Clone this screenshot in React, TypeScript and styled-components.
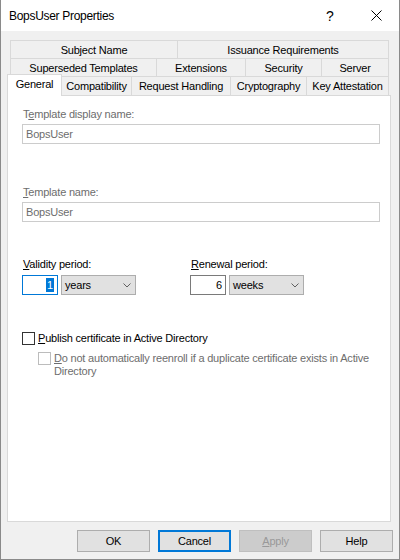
import React from 'react';
import styled, { createGlobalStyle, css } from 'styled-components';

const Global = createGlobalStyle`
  html, body {
    margin: 0;
    padding: 0;
    background: #f0f0f0;
  }
  body {
    font-family: "Liberation Sans", Arial, sans-serif;
    font-size: 11px;
    letter-spacing: -0.2px;
    color: #000;
  }
  * { box-sizing: border-box; }
`;

const Window = styled.div`
  width: 400px;
  height: 560px;
  background: #f0f0f0;
  border-left: 1px solid #8a8a8a;
  border-right: 1px solid #8a8a8a;
  border-bottom: 1px solid #8a8a8a;
  display: flex;
  flex-direction: column;
`;

const TitleBar = styled.div`
  flex: none;
  height: 31px;
  background: #fff;
  display: flex;
  align-items: center;
`;

const Title = styled.div`
  flex: 1;
  padding-left: 8px;
  font-size: 12px;
  letter-spacing: -0.3px;
`;

const CaptionButton = styled.div`
  width: 46px;
  height: 31px;
  display: flex;
  align-items: center;
  justify-content: center;
  font-size: 14px;
  letter-spacing: 0;
`;

const Body = styled.div`
  flex: 1;
  display: flex;
  flex-direction: column;
  padding: 9px 0 0 6px;
`;

const TabStrip = styled.div`
  display: flex;
  flex-direction: column;
  width: 384px;
`;

const TabRow = styled.div<{ $front?: boolean }>`
  display: flex;
  align-items: flex-end;
  padding: ${p => (p.$front ? '0' : '0 2px 0 3px')};
  height: ${p => (p.$front ? '19px' : '18px')};
`;

const Tab = styled.div<{ $w: number; $last?: boolean; $selected?: boolean; $noLeft?: boolean }>`
  flex: none;
  width: ${p => p.$w}px;
  height: 100%;
  display: flex;
  align-items: center;
  justify-content: center;
  white-space: nowrap;
  background: #f0f0f0;
  border-top: 1px solid #d9d9d9;
  border-left: ${p => (p.$noLeft ? 'none' : '1px solid #d9d9d9')};
  border-right: ${p => (p.$last ? '1px solid #d9d9d9' : 'none')};
  ${p =>
    p.$selected &&
    css`
      position: relative;
      z-index: 1;
      height: 22px;
      margin-bottom: -1px;
      padding-bottom: 3px;
      background: #fff;
      border-right: 1px solid #d9d9d9;
    `}
`;

const Panel = styled.div`
  width: 384px;
  height: 427px;
  background: #fff;
  border: 1px solid #d9d9d9;
  display: flex;
  flex-direction: column;
  padding: 12px 0 0 14px;
`;

const FieldLabel = styled.div<{ $disabled?: boolean; $gap?: number }>`
  height: 13px;
  line-height: 13px;
  margin-left: 1px;
  margin-top: ${p => p.$gap ?? 0}px;
  color: ${p => (p.$disabled ? '#6d6d6d' : '#000')};
  white-space: nowrap;
`;

const TextBox = styled.div`
  margin-top: 3px;
  width: 358px;
  height: 20px;
  border: 1px solid #cccccc;
  background: #fff;
  color: #6d6d6d;
  display: flex;
  align-items: center;
  padding-left: 3px;
`;

const PeriodRow = styled.div`
  margin-top: 36px;
  display: grid;
  grid-template-columns: 168px 120px;
`;

const PeriodGroup = styled.div`
  display: flex;
  flex-direction: column;
`;

const PeriodControls = styled.div`
  margin-top: 4px;
  display: flex;
  gap: 3px;
`;

const NumberBox = styled.div<{ $focused?: boolean }>`
  width: 36px;
  height: 20px;
  background: #fff;
  border: 1px solid ${p => (p.$focused ? '#0078d7' : '#7a7a7a')};
  display: flex;
  align-items: center;
  justify-content: flex-end;
  padding-right: 3px;
`;

const Selection = styled.span`
  background: #0078d7;
  color: #fff;
  height: 14px;
  line-height: 14px;
  padding: 0 1px;
`;

const Combo = styled.div`
  width: 75px;
  height: 20px;
  background: #e1e1e1;
  border: 1px solid #adadad;
  display: flex;
  align-items: center;
  justify-content: space-between;
  padding: 0 4px 0 3px;
`;

const CheckRow = styled.div<{ $indent?: number; $gap: number }>`
  display: flex;
  align-items: flex-start;
  margin-left: ${p => p.$indent ?? 0}px;
  margin-top: ${p => p.$gap}px;
`;

const Box = styled.span<{ $disabled?: boolean }>`
  flex: none;
  width: 13px;
  height: 13px;
  background: #fff;
  border: 1px solid ${p => (p.$disabled ? '#bcbcbc' : '#333333')};
`;

/* The first letter carries the keyboard-accelerator underline. */
const CheckText = styled.div<{ $disabled?: boolean }>`
  margin-left: 3px;
  line-height: 13px;
  width: ${p => (p.$disabled ? '330px' : 'auto')};
  color: ${p => (p.$disabled ? '#6d6d6d' : '#000')};
  &::first-letter {
    text-decoration: underline;
  }
`;

const ButtonBar = styled.div`
  margin-top: 8px;
  width: 386px;
  display: flex;
  justify-content: flex-end;
  gap: 8px;
`;

const Button = styled.div<{ $default?: boolean; $disabled?: boolean }>`
  width: 73px;
  height: 22px;
  display: flex;
  align-items: center;
  justify-content: center;
  background: ${p => (p.$disabled ? '#cccccc' : '#e1e1e1')};
  border: ${p =>
    p.$default ? '2px solid #0078d7' : p.$disabled ? '1px solid #bfbfbf' : '1px solid #adadad'};
  color: ${p => (p.$disabled ? '#999999' : '#000')};
`;

const U = styled.span`
  text-decoration: underline;
  text-underline-offset: 1px;
`;

const Chevron = () => (
  <svg width="8" height="5" viewBox="0 0 8 5">
    <path d="M0.5 0.5 L4 4 L7.5 0.5" fill="none" stroke="#606060" strokeWidth="1" />
  </svg>
);

const CloseGlyph = () => (
  <svg width="11" height="11" viewBox="0 0 11 11">
    <path d="M0.5 0.5 L10.5 10.5 M10.5 0.5 L0.5 10.5" stroke="#000" strokeWidth="1" />
  </svg>
);

export default function App() {
  return (
    <>
      <Global />
      <Window>
        <TitleBar>
          <Title>BopsUser Properties</Title>
          <CaptionButton>?</CaptionButton>
          <CaptionButton>
            <CloseGlyph />
          </CaptionButton>
        </TitleBar>
        <Body>
          <TabStrip>
            <TabRow>
              <Tab $w={167}>Subject Name</Tab>
              <Tab $w={212} $last>Issuance Requirements</Tab>
            </TabRow>
            <TabRow>
              <Tab $w={146}>Superseded Templates</Tab>
              <Tab $w={89}>Extensions</Tab>
              <Tab $w={76}>Security</Tab>
              <Tab $w={68} $last>Server</Tab>
            </TabRow>
            <TabRow $front>
              <Tab $w={55} $selected>General</Tab>
              <Tab $w={69} $noLeft>Compatibility</Tab>
              <Tab $w={99}>Request Handling</Tab>
              <Tab $w={76}>Cryptography</Tab>
              <Tab $w={83} $last>Key Attestation</Tab>
            </TabRow>
          </TabStrip>
          <Panel>
            <FieldLabel $disabled>
              T<U>e</U>mplate display name:
            </FieldLabel>
            <TextBox>BopsUser</TextBox>
            <FieldLabel $disabled $gap={42}>
              <U>T</U>emplate name:
            </FieldLabel>
            <TextBox>BopsUser</TextBox>
            <PeriodRow>
              <PeriodGroup>
                <FieldLabel>
                  <U>V</U>alidity period:
                </FieldLabel>
                <PeriodControls>
                  <NumberBox $focused>
                    <Selection>1</Selection>
                  </NumberBox>
                  <Combo>
                    years
                    <Chevron />
                  </Combo>
                </PeriodControls>
              </PeriodGroup>
              <PeriodGroup>
                <FieldLabel>
                  <U>R</U>enewal period:
                </FieldLabel>
                <PeriodControls>
                  <NumberBox>6</NumberBox>
                  <Combo>
                    weeks
                    <Chevron />
                  </Combo>
                </PeriodControls>
              </PeriodGroup>
            </PeriodRow>
            <CheckRow $gap={37}>
              <Box />
              <CheckText>Publish certificate in Active Directory</CheckText>
            </CheckRow>
            <CheckRow $gap={7} $indent={16}>
              <Box $disabled />
              <CheckText $disabled>
                Do not automatically reenroll if a duplicate certificate exists in Active Directory
              </CheckText>
            </CheckRow>
          </Panel>
          <ButtonBar>
            <Button>OK</Button>
            <Button $default>Cancel</Button>
            <Button $disabled>
              <U>A</U>pply
            </Button>
            <Button>Help</Button>
          </ButtonBar>
        </Body>
      </Window>
    </>
  );
}
